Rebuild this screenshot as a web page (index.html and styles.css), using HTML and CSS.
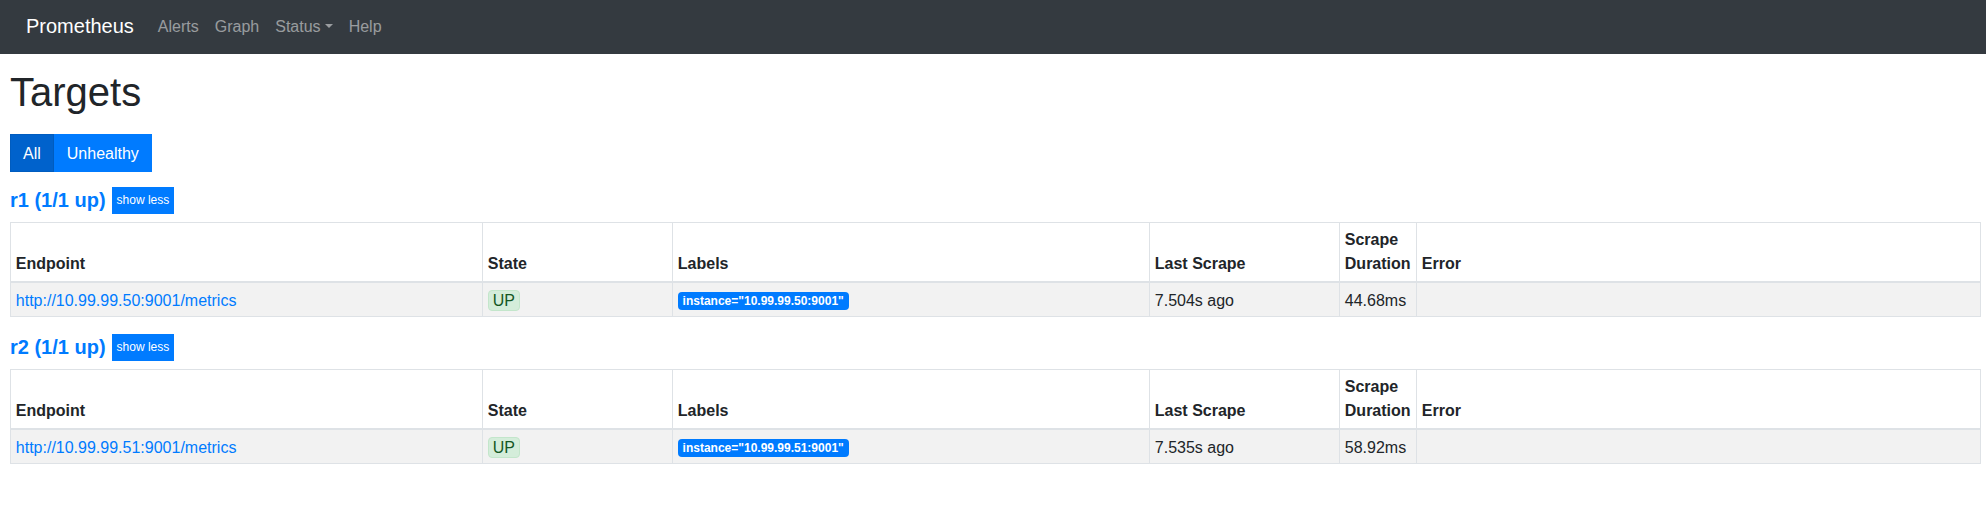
FILE: index.html
```html
<!DOCTYPE html>
<html lang="en">
<head>
<meta charset="utf-8">
<title>Prometheus Time Series Collection and Processing Server</title>
<link rel="stylesheet" href="styles.css">
</head>
<body>
<nav class="navbar">
  <a class="brand" href="#">Prometheus</a>
  <ul class="nav">
    <li><a class="nav-link" href="#">Alerts</a></li>
    <li><a class="nav-link" href="#">Graph</a></li>
    <li><a class="nav-link dropdown-toggle" href="#">Status</a></li>
    <li><a class="nav-link" href="#">Help</a></li>
  </ul>
</nav>
<main class="container">
  <h1 class="title">Targets</h1>
  <div class="btn-group">
    <button class="btn btn-active">All</button>
    <button class="btn">Unhealthy</button>
  </div>

  <section class="pool">
    <div class="pool-header">
      <a class="pool-name" href="#">r1 (1/1 up)</a>
      <button class="btn-xs">show less</button>
    </div>
    <table class="targets">
      <colgroup>
        <col class="c-endpoint"><col class="c-state"><col class="c-labels"><col class="c-last"><col class="c-dur"><col class="c-error">
      </colgroup>
      <thead>
        <tr><th>Endpoint</th><th>State</th><th>Labels</th><th>Last Scrape</th><th>Scrape Duration</th><th>Error</th></tr>
      </thead>
      <tbody>
        <tr>
          <td><a class="endpoint" href="#">http://10.99.99.50:9001/metrics</a></td>
          <td><span class="state-up">UP</span></td>
          <td><span class="label-badge">instance="10.99.99.50:9001"</span></td>
          <td>7.504s ago</td>
          <td>44.68ms</td>
          <td></td>
        </tr>
      </tbody>
    </table>
  </section>

  <section class="pool">
    <div class="pool-header">
      <a class="pool-name" href="#">r2 (1/1 up)</a>
      <button class="btn-xs">show less</button>
    </div>
    <table class="targets">
      <colgroup>
        <col class="c-endpoint"><col class="c-state"><col class="c-labels"><col class="c-last"><col class="c-dur"><col class="c-error">
      </colgroup>
      <thead>
        <tr><th>Endpoint</th><th>State</th><th>Labels</th><th>Last Scrape</th><th>Scrape Duration</th><th>Error</th></tr>
      </thead>
      <tbody>
        <tr>
          <td><a class="endpoint" href="#">http://10.99.99.51:9001/metrics</a></td>
          <td><span class="state-up">UP</span></td>
          <td><span class="label-badge">instance="10.99.99.51:9001"</span></td>
          <td>7.535s ago</td>
          <td>58.92ms</td>
          <td></td>
        </tr>
      </tbody>
    </table>
  </section>
</main>
</body>
</html>
```
FILE: styles.css
```css
* { box-sizing: border-box; }

body {
  margin: 0;
  font-family: "Liberation Sans", Arial, sans-serif;
  font-size: 16px;
  line-height: 1.5;
  color: #212529;
  background: #fff;
}

a { text-decoration: none; }

.navbar {
  height: 54px;
  background: #343a40;
  display: flex;
  align-items: center;
  padding: 0 26px;
}

.brand {
  color: #fff;
  font-size: 20px;
  line-height: 30px;
  margin-right: 16px;
  position: relative;
  top: -1px;
}

.nav {
  display: flex;
  list-style: none;
  margin: 0;
  padding: 0;
}

.nav-link {
  display: block;
  padding: 0 8px;
  line-height: 24px;
  color: rgba(255, 255, 255, 0.5);
}

.dropdown-toggle::after {
  content: "";
  display: inline-block;
  margin-left: 0.255em;
  vertical-align: 0.255em;
  border-top: 0.3em solid;
  border-right: 0.3em solid transparent;
  border-left: 0.3em solid transparent;
  border-bottom: 0;
}

.container {
  padding: 0 5px 0 10px;
}

.title {
  margin: 14px 0 18px;
  font-size: 40px;
  font-weight: 400;
  line-height: 48px;
}

.btn-group {
  display: flex;
  margin-bottom: 15px;
}

.btn {
  font-family: inherit;
  font-size: 16px;
  line-height: 24px;
  padding: 7px 12px 5px;
  border: 1px solid #007bff;
  background: #007bff;
  color: #fff;
  border-radius: 0;
  height: 38px;
}

.btn-active {
  background: #0062cc;
  border-color: #005cbf;
}

.pool-header {
  display: flex;
  align-items: center;
  height: 27px;
  margin-bottom: 8px;
}

.pool-name {
  color: #007bff;
  font-size: 20px;
  font-weight: 700;
  line-height: 24px;
  margin-right: 6px;
  position: relative;
  top: -1px;
}

.btn-xs {
  font-family: inherit;
  font-size: 12px;
  line-height: 17px;
  padding: 4px 4px;
  height: 27px;
  border: 1px solid #007bff;
  background: #007bff;
  color: #fff;
  border-radius: 0;
}

.targets {
  width: 100%;
  border-collapse: collapse;
  table-layout: fixed;
  margin-bottom: 17px;
  border: 1px solid #dee2e6;
}

.c-endpoint { width: 472px; }
.c-state { width: 190px; }
.c-labels { width: 477px; }
.c-last { width: 190px; }
.c-dur { width: 77px; }

.targets th,
.targets td {
  border: 1px solid #dee2e6;
  padding: 4.8px;
  text-align: left;
  line-height: 24px;
}

.targets th {
  vertical-align: bottom;
  font-weight: 700;
  border-bottom-width: 2px;
}

.targets td {
  vertical-align: top;
  padding-top: 6px;
  padding-bottom: 3.6px;
}

.targets tbody tr {
  background: #f2f2f2;
}

.endpoint {
  color: #007bff;
}

.state-up {
  display: inline-block;
  padding: 0 4px;
  line-height: 19px;
  color: #155724;
  background: #d4edda;
  border: 1px solid #c3e6cb;
  border-radius: 4px;
}

.label-badge {
  display: inline-block;
  font-size: 12px;
  font-weight: 700;
  line-height: 1;
  padding: 3px 4.8px;
  color: #fff;
  background: #007bff;
  border-radius: 4px;
  vertical-align: 1px;
}
```
